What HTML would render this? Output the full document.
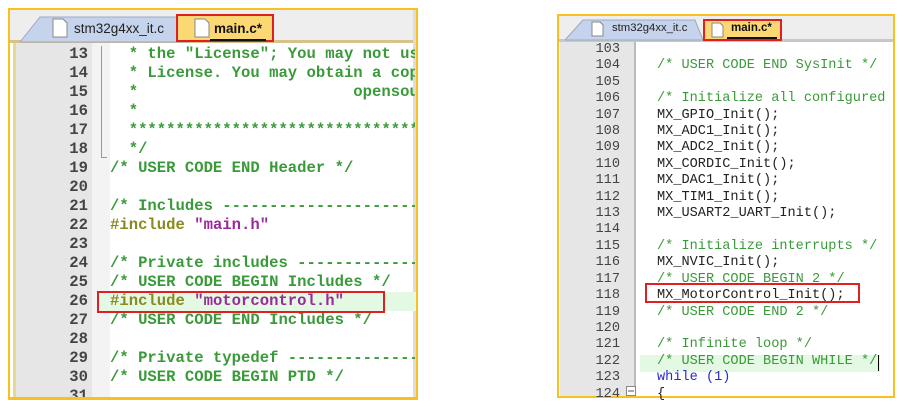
<!DOCTYPE html>
<html><head><meta charset="utf-8"><style>
*{margin:0;padding:0;box-sizing:border-box}
body{width:905px;height:411px;background:#fff;position:relative;overflow:hidden;font-family:"Liberation Mono",monospace}
.a{position:absolute}
.c{color:#3a9a3a}.s{color:#9a2a9a}.p{color:#8a8a20}.k{color:#2a2ad0}.n{color:#333}
.tab{position:absolute;font-family:"Liberation Sans",sans-serif;}
.ln{position:absolute;white-space:pre}
</style></head><body>

<!-- LEFT PANEL -->
<div class="a" style="left:8px;top:8px;width:410px;height:392px;border:2px solid #f9c020;background:#fff;overflow:hidden">
  <div class="a" style="left:0;top:0;width:406px;height:32px;background:#eeeeee"></div>
  <div class="a" style="left:0;top:30px;width:406px;height:3px;background:#d9c28a"></div>
  <div class="a" style="left:403px;top:0;width:3px;height:388px;background:#ddd"></div>
  <svg class="a" style="left:10px;top:5px" width="170" height="28"><path d="M0 27 L20 2 L160 2 L170 27 Z" fill="#c6d3ec" stroke="#9aa8c4"/></svg>
  <div class="tab" style="left:64px;top:11px;font-size:13.5px;color:#222">stm32g4xx_it.c</div>
  <svg class="a" style="left:42px;top:8px" width="16" height="20"><path d="M1 1 H11 L15 5 V19 H1 Z" fill="#fff" stroke="#888"/></svg>
  <div class="a" style="left:166px;top:4px;width:98px;height:28px;background:#fbd873;border:2px solid #e02020"></div>
  <svg class="a" style="left:184px;top:8px" width="16" height="20"><path d="M1 1 H11 L15 5 V19 H1 Z" fill="#fff" stroke="#888"/></svg>
  <div class="tab" style="left:204px;top:11px;font-size:13.5px;font-weight:bold;color:#111">main.c*</div>
  <div class="a" style="left:200px;top:29px;width:56px;height:2px;background:#111"></div>
  <div class="a" style="left:3px;top:33px;width:3px;height:360px;background:#e9d890"></div>
  <div class="a" style="left:6px;top:33px;width:76px;height:360px;background:#e6e6e6"></div>
  <div class="a" style="left:82px;top:33px;width:18px;height:360px;background:#f3f3f3"></div>
  <div class="a" style="left:91px;top:36px;width:1px;height:112px;background:#999"></div>
  <div class="a" style="left:91px;top:147px;width:6px;height:1px;background:#999"></div>
</div>
<div class="a" style="left:8px;top:8px;width:410px;height:392px;border:2px solid #f9c020"></div>
<div class="a" style="left:100px;top:292px;width:316px;height:19px;background:#e3f9e3"></div>

<div class="a" style="left:0;top:45px;font-size:15.6px;line-height:19px;font-weight:bold">
<div class="ln n" style="left:40px;width:48px;text-align:right;color:#444">13
14
15
16
17
18
19
20
21
22
23
24
25
26
27
28
29
30
31</div>
<div class="ln" style="left:110px;width:305px;overflow:hidden"><span class="c">  * the "License"; You may not use
  * License. You may obtain a copy
  *                       opensou
  *
  **********************************
  */
/* USER CODE END Header */

/* Includes ---------------------
</span><span class="p">#include </span><span class="s">"main.h"</span>

<span class="c">/* Private includes -------------
/* USER CODE BEGIN Includes */
</span><span class="p">#include </span><span class="s">"motorcontrol.h"</span>
<span class="c">/* USER CODE END Includes */

/* Private typedef --------------
/* USER CODE BEGIN PTD */</span>
</div>
</div>
<div class="a" style="left:97px;top:291px;width:288px;height:22px;border:2px solid #e02020"></div>
<div class="a" style="left:10px;top:397px;width:406px;height:3px;background:#f9c020"></div>

<!-- RIGHT PANEL -->
<div class="a" style="left:557px;top:14px;width:338px;height:384px;border:2px solid #f9c020;background:#fff;overflow:hidden">
  <div class="a" style="left:0;top:0;width:334px;height:24px;background:#eeeeee"></div>
  <div class="a" style="left:0;top:23px;width:334px;height:3px;background:#c8c8c8"></div>
  <svg class="a" style="left:6px;top:3px" width="140" height="22"><path d="M0 21 L18 1 L130 1 L138 21 Z" fill="#c6d3ec" stroke="#9aa8c4"/></svg>
  <svg class="a" style="left:32px;top:5px" width="13" height="16"><path d="M1 1 H9 L12 4 V15 H1 Z" fill="#fff" stroke="#888"/></svg>
  <div class="tab" style="left:53px;top:6px;font-size:11.3px;color:#222">stm32g4xx_it.c</div>
  <div class="a" style="left:144px;top:3px;width:79px;height:22px;background:#fbd873;border:2px solid #e02020"></div>
  <svg class="a" style="left:152px;top:6px" width="13" height="16"><path d="M1 1 H9 L12 4 V15 H1 Z" fill="#fff" stroke="#888"/></svg>
  <div class="tab" style="left:172px;top:6px;font-size:11.5px;font-weight:bold;color:#111">main.c*</div>
  <div class="a" style="left:168px;top:21px;width:50px;height:2px;background:#111"></div>
  <div class="a" style="left:1px;top:26px;width:74px;height:360px;background:#e6e6e6"></div>
  <div class="a" style="left:75px;top:26px;width:2px;height:360px;background:#bbb"></div>
</div>
<div class="a" style="left:640px;top:355px;width:240px;height:17px;background:#e3f9e3"></div>
<div class="a" style="left:878px;top:355px;width:1px;height:16px;background:#000"></div>
<svg class="a" style="left:626px;top:386px" width="10" height="10"><rect x="0.5" y="0.5" width="9" height="9" fill="#fff" stroke="#888"/><path d="M2 5 H8" stroke="#555"/></svg>

<div class="a" style="left:0;top:42px;font-size:13.6px;line-height:16.4px">
<div class="ln" style="left:580px;width:40px;text-align:right;color:#444">103
104
105
106
107
108
109
110
111
112
113
114
115
116
117
118
119
120
121
122
123
124</div>
<div class="ln" style="left:657px;width:234px;overflow:hidden;color:#222"><span class="c">
/* USER CODE END SysInit */

/* Initialize all configured pe</span>
MX_GPIO_Init();
MX_ADC1_Init();
MX_ADC2_Init();
MX_CORDIC_Init();
MX_DAC1_Init();
MX_TIM1_Init();
MX_USART2_UART_Init();

<span class="c">/* Initialize interrupts */</span>
MX_NVIC_Init();
<span class="c">/* USER CODE BEGIN 2 */</span>
MX_MotorControl_Init();
<span class="c">/* USER CODE END 2 */

/* Infinite loop */
/* USER CODE BEGIN WHILE */</span>
<span class="k">while</span> <span class="k">(1)</span>
{</div>
</div>
<div class="a" style="left:645px;top:283px;width:215px;height:20px;border:2px solid #e02020"></div>
</body></html>
